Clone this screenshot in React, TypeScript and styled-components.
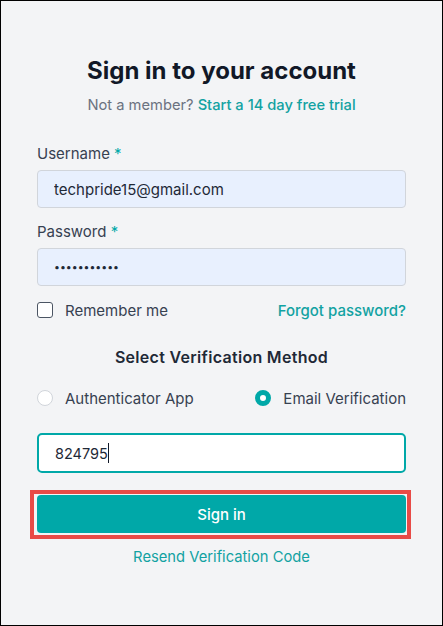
import styled, { createGlobalStyle } from "styled-components";

const GlobalStyle = createGlobalStyle`
  * {
    box-sizing: border-box;
  }

  body {
    margin: 0;
    font-family: Inter, "Noto Sans", sans-serif;
    background-color: #f3f4f6;
  }
`;

const TEAL = "#00a8a8";
const LINK = "#12a2a2";

const Page = styled.div`
  width: 443px;
  height: 626px;
  border: 1px solid #000;
  background-color: #f3f4f6;
  padding: 54px 36px 0;
  display: flex;
  flex-direction: column;
`;

const Title = styled.h2`
  margin: 0;
  font-size: 24px;
  line-height: 32px;
  font-weight: 700;
  color: #111827;
  text-align: center;
`;

const Subtitle = styled.p`
  margin: 8px 0 0;
  font-size: 14.7px;
  line-height: 20px;
  color: #6b7280;
  text-align: center;
`;

const Link = styled.a<{ $weight?: number }>`
  color: ${LINK};
  font-weight: ${(p) => p.$weight ?? 500};
  text-decoration: none;
  cursor: pointer;
`;

const Form = styled.form`
  margin-top: 29px;
  display: flex;
  flex-direction: column;
`;

const Field = styled.div<{ $gap?: number }>`
  display: flex;
  flex-direction: column;
  gap: 6px;
  margin-top: ${(p) => p.$gap ?? 0}px;
`;

const Label = styled.label`
  font-size: 15px;
  line-height: 20px;
  color: #374151;
`;

const Star = styled.span`
  color: ${TEAL};
`;

const Input = styled.input<{ $dots?: boolean }>`
  width: 100%;
  height: 38px;
  padding: 0 16px;
  border: 1px solid #d1d5db;
  border-radius: 4px;
  background-color: #e8f0fe;
  font-family: inherit;
  font-size: ${(p) => (p.$dots ? "10.5px" : "15px")};
  color: #1f2937;
  outline: none;
`;

const Row = styled.div<{ $top: number }>`
  margin-top: ${(p) => p.$top}px;
  display: flex;
  align-items: center;
  justify-content: space-between;
  height: 20px;
`;

const Option = styled.label`
  display: flex;
  align-items: center;
  gap: 12px;
  font-size: 15px;
  color: #374151;
`;

const Checkbox = styled.span`
  width: 16px;
  height: 16px;
  border: 1.5px solid #4b5563;
  border-radius: 3px;
  background-color: #fff;
`;

const Radio = styled.span<{ $checked?: boolean }>`
  width: 16px;
  height: 16px;
  border-radius: 50%;
  border: ${(p) => (p.$checked ? `5px solid ${TEAL}` : "1px solid #d1d5db")};
  background-color: #fff;
`;

const SmallLink = styled(Link)`
  font-size: 15px;
`;

const SectionTitle = styled.h3`
  margin: 26px 0 0;
  font-size: 16px;
  line-height: 22px;
  font-weight: 600;
  letter-spacing: 0.3px;
  color: #1f2937;
  text-align: center;
`;

const CodeField = styled.div`
  margin-top: 25px;
  height: 40px;
  border: 2px solid ${TEAL};
  border-radius: 5px;
  background-color: #fff;
  padding: 0 16px;
  display: flex;
  align-items: center;
  font-size: 14.5px;
  color: #1f2937;
`;

const Caret = styled.span`
  width: 1px;
  height: 20px;
  background-color: #111827;
`;

/* red annotation box around the submit button */
const Highlight = styled.div`
  margin: 17px -5px 0 -7px;
  padding: 1px 1px 2px 3px;
  border: 4px solid #e84b47;
`;

const Button = styled.button`
  display: block;
  height: 38px;
  width: 100%;
  border: none;
  border-radius: 4px;
  background-color: ${TEAL};
  color: #fff;
  font-family: inherit;
  font-size: 15px;
  font-weight: 500;
  cursor: pointer;
`;

const Resend = styled(Link)`
  margin-top: 8px;
  font-size: 14.75px;
  line-height: 20px;
  font-weight: 400;
  text-align: center;
`;

export default function App() {
  return (
    <>
      <GlobalStyle />
      <Page>
        <Title>Sign in to your account</Title>
        <Subtitle>
          Not a member? <Link>Start a 14 day free trial</Link>
        </Subtitle>

        <Form onSubmit={(e) => e.preventDefault()}>
          <Field>
            <Label>
              Username <Star>*</Star>
            </Label>
            <Input type="email" value="techpride15@gmail.com" readOnly />
          </Field>
          <Field $gap={14}>
            <Label>
              Password <Star>*</Star>
            </Label>
            <Input type="password" value="techpride15" readOnly $dots />
          </Field>

          <Row $top={14}>
            <Option>
              <Checkbox />
              Remember me
            </Option>
            <SmallLink>Forgot password?</SmallLink>
          </Row>

          <SectionTitle>Select Verification Method</SectionTitle>

          <Row $top={20}>
            <Option>
              <Radio />
              Authenticator App
            </Option>
            <Option>
              <Radio $checked />
              Email Verification
            </Option>
          </Row>

          <CodeField>
            824795
            <Caret />
          </CodeField>

          <Highlight>
            <Button type="submit">Sign in</Button>
          </Highlight>
          <Resend>Resend Verification Code</Resend>
        </Form>
      </Page>
    </>
  );
}
